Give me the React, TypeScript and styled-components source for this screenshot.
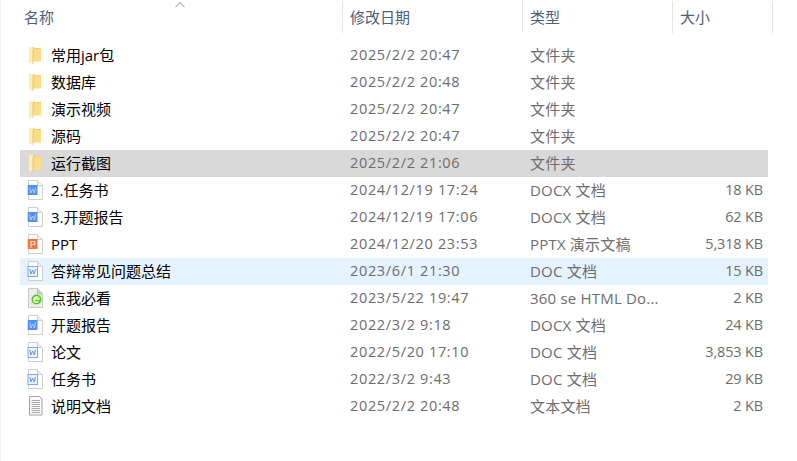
import React from 'react';
import styled, { createGlobalStyle } from 'styled-components';

type RowState = 'normal' | 'selected' | 'hover';
type IconKind = 'folder' | 'docx' | 'doc' | 'ppt' | 'html' | 'txt';

interface FileEntry {
    name: string;
    date: string;
    type: string;
    size?: string;
    icon: IconKind;
    state?: RowState;
}

const files: FileEntry[] = [
    { name: '常用jar包', date: '2025/2/2 20:47', type: '文件夹', icon: 'folder' },
    { name: '数据库', date: '2025/2/2 20:48', type: '文件夹', icon: 'folder' },
    { name: '演示视频', date: '2025/2/2 20:47', type: '文件夹', icon: 'folder' },
    { name: '源码', date: '2025/2/2 20:47', type: '文件夹', icon: 'folder' },
    { name: '运行截图', date: '2025/2/2 21:06', type: '文件夹', icon: 'folder', state: 'selected' },
    { name: '2.任务书', date: '2024/12/19 17:24', type: 'DOCX 文档', size: '18 KB', icon: 'docx' },
    { name: '3.开题报告', date: '2024/12/19 17:06', type: 'DOCX 文档', size: '62 KB', icon: 'docx' },
    { name: 'PPT', date: '2024/12/20 23:53', type: 'PPTX 演示文稿', size: '5,318 KB', icon: 'ppt' },
    { name: '答辩常见问题总结', date: '2023/6/1 21:30', type: 'DOC 文档', size: '15 KB', icon: 'doc', state: 'hover' },
    { name: '点我必看', date: '2023/5/22 19:47', type: '360 se HTML Do...', size: '2 KB', icon: 'html' },
    { name: '开题报告', date: '2022/3/2 9:18', type: 'DOCX 文档', size: '24 KB', icon: 'docx' },
    { name: '论文', date: '2022/5/20 17:10', type: 'DOC 文档', size: '3,853 KB', icon: 'doc' },
    { name: '任务书', date: '2022/3/2 9:43', type: 'DOC 文档', size: '29 KB', icon: 'doc' },
    { name: '说明文档', date: '2025/2/2 20:48', type: '文本文档', size: '2 KB', icon: 'txt' },
];

const GlobalStyle = createGlobalStyle`
    html, body {
        margin: 0;
        padding: 0;
        background: #ffffff;
    }
    body {
        font-family: "Open Sans", "Noto Sans CJK SC", sans-serif;
    }
`;

const Window = styled.div`
    width: 797px;
    height: 461px;
    box-sizing: border-box;
    padding: 1px 0 0 20px;
    overflow: hidden;
    border-left: 1px solid #f2f2f2;
    position: relative;
`;

const HeaderRow = styled.div`
    display: grid;
    grid-template-columns: 322px 180px 150px 100px;
    height: 32px;
    margin-bottom: 9px;
`;

const HeaderCell = styled.div<{ $inset: number }>`
    box-sizing: border-box;
    display: flex;
    align-items: center;
    padding: 0 0 2px ${(p) => p.$inset}px;
    border-right: 1px solid #e5e5e5;
    font-size: 15px;
    color: #4c607a;
`;

const SortArrow = styled.svg`
    position: absolute;
    left: 174px;
    top: 1px;
`;

const RowList = styled.div`
    display: flex;
    flex-direction: column;
    width: 748px;
    margin-left: -1px;
`;

const Row = styled.div<{ $state: RowState }>`
    display: grid;
    grid-template-columns: 322px 180px 150px 96px;
    box-sizing: border-box;
    height: 27px;
    padding-bottom: 2px;
    align-items: center;
    background: ${(p) =>
        p.$state === 'selected' ? '#d9d9d9' : p.$state === 'hover' ? '#e5f3ff' : 'transparent'};
`;

const NameCell = styled.div`
    display: flex;
    align-items: center;
    padding-left: 6px;
    gap: 7px;
    font-size: 15px;
    color: #000000;
    white-space: nowrap;
`;

const IconSlot = styled.div`
    width: 18px;
    height: 20px;
    flex: none;
    display: flex;
    align-items: center;
    justify-content: center;
`;

const InfoCell = styled.div`
    padding-left: 8px;
    font-size: 14.5px;
    color: #6d6d6d;
    white-space: nowrap;
`;

const DateCell = styled(InfoCell)`
    letter-spacing: 0.65px;
`;

const TypeCell = styled(InfoCell)`
    font-size: 15px;
    letter-spacing: 0.2px;
`;

const SizeCell = styled(InfoCell)`
    padding: 0 5px 0 0;
    text-align: right;
    letter-spacing: -0.15px;
`;

const FolderIcon = () => (
    <svg width="18" height="20" viewBox="0 0 18 20">
        <path d="M3 2h5l1 1h6v13H3z" fill="#f6cf68" />
        <path d="M7 4h8v12.5H7z" fill="#fcdc84" />
        <path d="M3 2h4v15l-4 2z" fill="#fdeeb8" />
        <path d="M7 4v15" stroke="#e9bf55" strokeWidth="0.8" />
    </svg>
);

const PageBase = ({ children }: { children?: React.ReactNode }) => (
    <svg width="18" height="20" viewBox="0 0 18 20">
        <path d="M2.5.5h9l5 5v14h-14z" fill="#ffffff" stroke="#cfcfcf" />
        <path d="M11.5.5v5h5" fill="#f0f0f0" stroke="#cfcfcf" />
        {children}
    </svg>
);

const FileIcon = ({ kind }: { kind: IconKind }) => {
    if (kind === 'folder') return <FolderIcon />;
    if (kind === 'docx') {
        return (
            <PageBase>
                <rect x="1.7" y="5" width="9.8" height="10" fill="#5490f2" />
                <path d="M3.6 7.5l1.2 5.5 1.8-4 1.8 4 1.2-5.5" fill="none" stroke="#bcd4fa" strokeWidth="0.9" />
            </PageBase>
        );
    }
    if (kind === 'doc') {
        return (
            <PageBase>
                <rect x="2" y="5.5" width="9.5" height="10" fill="#eef4fe" stroke="#7aa8f2" />
                <path d="M3.8 8l1.1 5 1.7-4 1.7 4 1.1-5" fill="none" stroke="#4f8cf0" strokeWidth="0.9" />
            </PageBase>
        );
    }
    if (kind === 'ppt') {
        return (
            <PageBase>
                <rect x="1.7" y="5" width="9.8" height="10" fill="#f5743d" />
                <path d="M5 13.5V7.5h3.6v3H5" fill="none" stroke="#fde3d6" strokeWidth="1.2" />
            </PageBase>
        );
    }
    if (kind === 'html') {
        return (
            <svg width="18" height="20" viewBox="0 0 18 20">
                <path d="M2.5.5h9l5 5v14h-14z" fill="#efefea" stroke="#c8c8c8" />
                <path d="M11.5.5v5h5" fill="#d4d4d4" stroke="#b8b8b8" />
                <circle cx="10.5" cy="11.5" r="5" fill="#55c81e" />
                <path d="M8 11h5a2.6 2.6 0 1 0-.5 2.2" fill="none" stroke="#ffffff" strokeWidth="1.4" />
                <path d="M5 15.5c2-1 8-6 10.500-9" fill="none" stroke="#b4e83c" strokeWidth="1" />
            </svg>
        );
    }
    return (
        <svg width="18" height="20" viewBox="0 0 18 20">
            <path d="M3.500.5h10l2.500 2.500v16h-12.500z" fill="#fbfbfb" stroke="#a0a0a0" />
            <path d="M5.500 4.500h8.500M5.500 6.500h8.500M5.500 8.500h8.500M5.500 10.500h8.500M5.500 12.500h8.500M5.500 14.500h8.500M5.500 16.500h8.500" stroke="#a8a8a8" strokeWidth="1" />
        </svg>
    );
};

const App = () => (
    <>
        <GlobalStyle />
        <Window>
            <SortArrow width="10" height="7" viewBox="0 0 10 7">
                <path d="M.5 6L5 1.500 9.500 6" fill="none" stroke="#8a8a8a" strokeWidth="1" />
            </SortArrow>
            <HeaderRow>
                <HeaderCell $inset={3}>名称</HeaderCell>
                <HeaderCell $inset={7}>修改日期</HeaderCell>
                <HeaderCell $inset={7}>类型</HeaderCell>
                <HeaderCell $inset={7}>大小</HeaderCell>
            </HeaderRow>
            <RowList>
                {files.map((file) => (
                    <Row key={file.name} $state={file.state ?? 'normal'}>
                        <NameCell>
                            <IconSlot>
                                <FileIcon kind={file.icon} />
                            </IconSlot>
                            {file.name}
                        </NameCell>
                        <DateCell>{file.date}</DateCell>
                        <TypeCell>{file.type}</TypeCell>
                        <SizeCell>{file.size}</SizeCell>
                    </Row>
                ))}
            </RowList>
        </Window>
    </>
);

export default App;
